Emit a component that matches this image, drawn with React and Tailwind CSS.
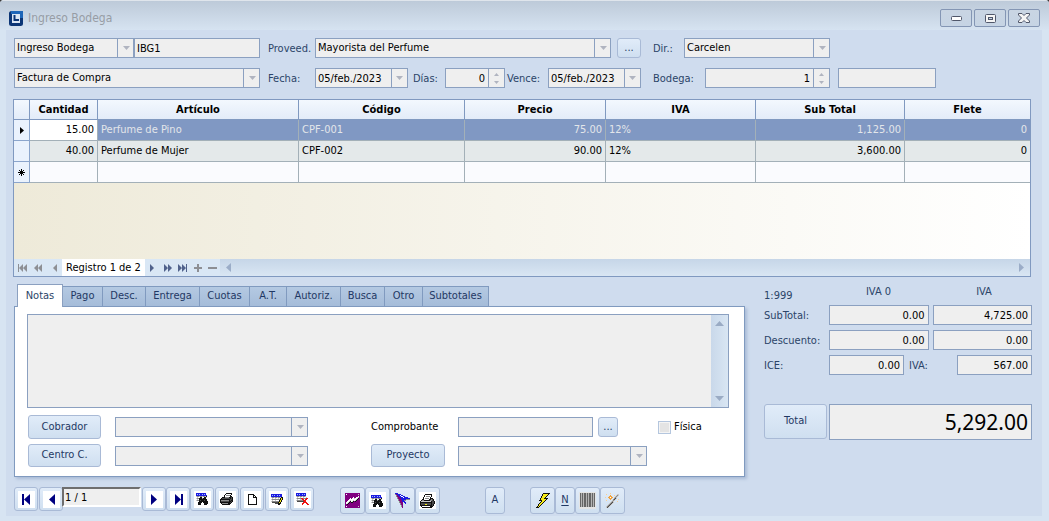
import React from "react";

const FIELD =
  "h-5 min-w-0 rounded-none border border-[#8ba0c0] bg-[#efefef] text-[11px] text-black outline-none";
const BTN =
  "flex items-center justify-center rounded-[3px] border border-[#a9bad6] bg-linear-to-b from-[#e1ecf9] to-[#cfdff0] text-[11px] text-[#1f3864]";
const LABEL = "pt-[2px] text-[11px] text-[#2b4468] whitespace-nowrap";

function Tri() {
  return (
    <svg width="7" height="4" viewBox="0 0 7 4" aria-hidden="true">
      <polygon points="0,0 7,0 3.5,4" fill="#b0b4c0" />
    </svg>
  );
}

function Combo({ label, value, id, className = "" }) {
  return (
    <div className={"relative " + className}>
      <select id={id} aria-label={label} defaultValue={value} className={FIELD + " block w-full appearance-none pl-[2px] pr-5"}>
        <option>{value}</option>
      </select>
      <span className="pointer-events-none absolute inset-y-0 right-0 flex w-[17px] items-center justify-center border-l border-[#8ba0c0]">
        <Tri />
      </span>
    </div>
  );
}

function DateBox({ id, value, className = "" }) {
  return (
    <div className={"flex " + className}>
      <input id={id} defaultValue={value} className={FIELD + " flex-1 pl-[2px]"} />
      <button type="button" aria-label="Abrir calendario" className="-ml-px flex h-5 w-[17px] items-center justify-center border border-[#8ba0c0] bg-[#efefef]">
        <Tri />
      </button>
    </div>
  );
}

function Spin({ id, value, className = "" }) {
  return (
    <div className={"flex " + className}>
      <input id={id} defaultValue={value} className={FIELD + " flex-1 pr-[3px] text-right"} />
      <div className="-ml-px flex h-5 w-[17px] flex-col items-center justify-center gap-[5px] border border-[#8ba0c0] bg-[#efefef]">
        <button type="button" aria-label="Subir"><svg width="5" height="3" viewBox="0 0 5 3" className="block"><polygon points="0,3 5,3 2.5,0" fill="#b0b4c0" /></svg></button>
        <button type="button" aria-label="Bajar"><svg width="5" height="3" viewBox="0 0 5 3" className="block"><polygon points="0,0 5,0 2.5,3" fill="#b0b4c0" /></svg></button>
      </div>
    </div>
  );
}

const PALETTE = {
  k: "#111111", b: "#1c1ce0", n: "#000080", g: "#8a8a8a", l: "#c9c9c9", w: "#ffffff",
  r: "#ee1111", y: "#f6ec1a", d: "#4a4a4a", p: "#800080", o: "#f9cf96", q: "#f2a23c", c: "#9fb8ff",
};

function Pixels({ rows, white = true }) {
  const w = Math.max(...rows.map((r) => r.length));
  const cells = [];
  rows.forEach((row, y) => {
    [...row].forEach((ch, x) => {
      if (PALETTE[ch]) cells.push(<rect key={x + "-" + y} x={x} y={y} width="1" height="1" fill={PALETTE[ch]} />);
    });
  });
  return (
    <span className={"flex h-[17px] w-[17px] items-center justify-center " + (white ? "bg-white" : "")}>
      <svg width={w} height={rows.length} viewBox={`0 0 ${w} ${rows.length}`} shapeRendering="crispEdges" aria-hidden="true">
        {cells}
      </svg>
    </span>
  );
}

function NavIcon({ flip, bar }) {
  return (
    <span className="flex h-[17px] w-[17px] items-center justify-center bg-white">
      <svg width="17" height="17" viewBox="0 0 17 17" className={flip ? "-scale-x-100" : ""} aria-hidden="true">
        {bar && <rect x="4" y="3" width="2" height="11" fill="#000080" />}
        <polygon points="12,3 12,14 6,8.5" fill="#000080" />
      </svg>
    </span>
  );
}

const FIND = [
  "bbbbbbbbbb...",
  "bcbcbbcbcb...",
  "bbbbbbbbbbb..",
  "lgglgglgglk..",
  ".lwwkkwwkkl..",
  "lggkkkgkkk...",
  ".lwkkkkkkkk..",
  "lggkdkkkdkk..",
  "...kkkkkkkkk.",
  "..kkkk.kkkkk.",
  "..kkk...kkkk.",
  "..kkk...kkk..",
];
const PRINT = [
  "......kkkkkk..",
  ".....kwwwwwk..",
  "....kwggggk...",
  "....kwwwwwkk..",
  "..kkkggggkkdk.",
  ".kddddddddkdk.",
  "kkkkkkkkkkddk.",
  "kggggggggkdkk.",
  "kddddddddkkdk.",
  "kkkkkkkkkkdk..",
  ".kggggggkkk...",
  "..kkkkkkkk....",
];
const PRINT_COLOR = [
  ".....kkkkkkk...",
  "....kwwwwwwk...",
  "....kwggggwk...",
  "...kwwwwwwk....",
  "...kwggggwkkk..",
  "..kkwwwwwkkgdk.",
  ".kggkkkkkkggdk.",
  "kllllllllllkddk",
  "kkkkkkkkkkkkddk",
  "kddddddddddkddk",
  "kddddyyddddkdk.",
  "kkkkkkkkkkkkdk.",
  ".kwwwwwwwwkkk..",
  "..kkkkkkkkkk...",
];
const PAGE = [
  "kkkkkk...",
  "k....kk..",
  "k....k.k.",
  "k....kkkk",
  "k.......k",
  "k.......k",
  "k.......k",
  "k.......k",
  "k.......k",
  "k.......k",
  "kkkkkkkkk",
];
const EDIT = [
  "bbbbbbbbbbb..",
  "bcbcbbcbcbb..",
  "bbbbbbbbbbb..",
  "lgglgglgglkk.",
  ".lwwlwwlwkyk.",
  "lggggggggkyk.",
  ".lwwlwwwkyk..",
  "lgggggggkyk..",
  ".ddddddkyk...",
  "....dddkkk...",
  ".......kk....",
];
const DEL = [
  "bbbbbbbbbb...",
  "bcbcbbcbcb...",
  "bbbbbbbbbb...",
  "lgglgglggl...",
  ".lwwlwwlwwl..",
  "lggggrrgggrr.",
  ".lwwllrrwrr..",
  "lggggggrrr...",
  ".dddddddrr...",
  ".......rrrr..",
  "......rr..rr.",
  "......r....rr",
];
const CHART = [
  "ppppppppppppppp",
  "pwppppppppppplp",
  "ppppppppppppppp",
  "pppppppppppppwp",
  "ppppppppwppwwlp",
  "pppppwpwwlwwlkp",
  "ppppwwwwwwwlkpp",
  "pppwwlwwlwlkppp",
  "ppwwlkwlkpkpppp",
  "pwwlkpkkppppppp",
  "pwlkppppppppppp",
  "ppkpppppppppppp",
  "ppppppppppppppp",
  "pwppppppppppplp",
  "ppppppppppppppp",
];
const CURSOR = [
  "bbb............",
  "gpbbbb.........",
  ".gpbbwbb.......",
  ".gppbbwwbb.....",
  "..gppbbbwbbbb..",
  "..gpppbbbbbbbbb",
  "...gppbbbbbgggg",
  "...gpppbbgg....",
  "....gppbbb.....",
  "....gppp.bb....",
  ".....gpp..b....",
  ".....gpp.......",
  "......gp.......",
  "......gp.......",
  ".......p.......",
];
const BOLT = [
  ".......kkkkkkk",
  "......kyyyyyk.",
  "......kyyyyk..",
  ".....kyyyyk...",
  ".....kyyyk....",
  "....kyyykkkk..",
  "....kyyyyyk...",
  "...kkkyyyk....",
  ".....kyyk.....",
  "....kyyk......",
  "...kyyk.......",
  "..kyyk........",
  "..kyk.........",
  ".kyk..........",
  "kkk...........",
];
const WAND = [
  ".....o.........",
  ".o..........ll.",
  ".....q...o.lgl.",
  "....qqq...lgl..",
  "o..qqwqq.lgl...",
  "....qqq..gdl...",
  ".....q..gdl..o.",
  ".o.....lgl.....",
  "......lgl...o..",
  ".....lgdl......",
  "....lgdl.......",
  "...lgdl........",
  "..lgdl.........",
  ".lgdl..........",
  ".ldl...........",
];

function Barcode() {
  const bars = [[0, 1], [2, 1], [4, 2], [7, 1], [9, 2], [12, 1], [14, 1]];
  return (
    <svg width="17" height="17" viewBox="0 0 17 17" shapeRendering="crispEdges" aria-hidden="true">
      <rect width="17" height="17" fill="#e4e4e4" />
      <rect x="1" y="1" width="14" height="14" fill="#b4b4b4" />
      {bars.map(([x, w]) => (
        <rect key={x} x={x + 1} y="1" width={w} height="14" fill="#666666" />
      ))}
    </svg>
  );
}

function Tool({ label, className = "h-6 w-6", children }) {
  return (
    <button aria-label={label} className={BTN + " shrink-0 " + className}>
      {children}
    </button>
  );
}

const COLUMNS = ["Cantidad", "Artículo", "Código", "Precio", "IVA", "Sub Total", "Flete"];
const TABS = [
  ["Pago", "w-[41px]"],
  ["Desc.", "w-[44px]"],
  ["Entrega", "w-[55px]"],
  ["Cuotas", "w-[51px]"],
  ["A.T.", "w-[38px]"],
  ["Autoriz.", "w-[55px]"],
  ["Busca", "w-[45px]"],
  ["Otro", "w-[39px]"],
  ["Subtotales", "w-[67px]"],
];

function TitleBar() {
  const wb =
    "flex h-[18px] w-8 items-center justify-center rounded-[2px] border border-[#8496b4] bg-linear-to-b from-[#c9d5e3] to-[#c6d4e4]";
  return (
    <header className="flex h-[30px] items-start justify-between border-t border-[#dfe5ec] bg-linear-to-b from-[#bdcad9] to-[#d6e3f1] pl-[9px] pr-[9px]">
      <div className="flex items-center gap-[5px] pt-[9px]">
        <svg width="14" height="15" viewBox="0 0 14 15" aria-hidden="true">
          <rect x="1.500" y="1.500" width="11" height="12" rx="1" fill="#dbe6f4" stroke="#0c3676" strokeWidth="3" />
          <path d="M2 1.500H12.500V7" fill="none" stroke="#1e66b8" strokeWidth="3" />
          <path d="M5.500 4V9H10" fill="none" stroke="#0c3676" strokeWidth="2" />
        </svg>
        <h1 className="text-[12px] leading-4 text-[#979da5]">Ingreso Bodega</h1>
      </div>
      <div className="flex gap-[2px] pt-2">
        <button aria-label="Minimizar" className={wb}>
          <svg width="11" height="5" viewBox="0 0 11 5"><rect x="0.500" y="0.500" width="10" height="4" rx="1" fill="#fff" stroke="#50576a" /></svg>
        </button>
        <button aria-label="Restaurar" className={wb}>
          <svg width="11" height="9" viewBox="0 0 11 9"><rect x="0.500" y="0.500" width="10" height="8" rx="1" fill="#f5f5f5" stroke="#50576a" /><rect x="3.500" y="3.500" width="4" height="2" fill="#c6d4e4" stroke="#50576a" /></svg>
        </button>
        <button aria-label="Cerrar" className={wb}>
          <svg width="12" height="10" viewBox="0 0 12 10">
            <path d="M0.500 0.500H4L6 2.500L8 0.500H11.500V2L8.500 5L11.500 8V9.500H8L6 7.500L4 9.500H0.500V8L3.500 5L0.500 2Z" fill="#f5f5f5" stroke="#50576a" />
          </svg>
        </button>
      </div>
    </header>
  );
}

function Form() {
  return (
    <form className="flex flex-col gap-[10px] pl-px" onSubmit={(e) => e.preventDefault()}>
      <div className="flex items-center">
        <Combo label="Tipo de ingreso" value="Ingreso Bodega" className="w-[120px]" />
        <input aria-label="Serie" defaultValue="IBG1" className={FIELD + " w-[126px] pl-[2px]"} />
        <label htmlFor="prov" className={LABEL + " ml-2 w-[47px]"}>Proveed.</label>
        <Combo id="prov" value="Mayorista del Perfume" className="w-[296px]" />
        <button type="button" aria-label="Buscar proveedor" className={BTN + " ml-[6px] h-5 w-6"}>...</button>
        <label htmlFor="dir" className={LABEL + " ml-3 w-[31px]"}>Dir.:</label>
        <Combo id="dir" value="Carcelen" className="w-[146px]" />
      </div>
      <div className="flex items-center">
        <Combo label="Documento" value="Factura de Compra" className="w-[246px]" />
        <label htmlFor="fecha" className={LABEL + " ml-2 w-[47px]"}>Fecha:</label>
        <DateBox id="fecha" value="05/feb./2023" className="w-[93px]" />
        <label htmlFor="dias" className={LABEL + " ml-[5px] w-8"}>Días:</label>
        <Spin id="dias" value="0" className="w-[60px]" />
        <label htmlFor="vence" className={LABEL + " ml-[2px] w-[41px]"}>Vence:</label>
        <DateBox id="vence" value="05/feb./2023" className="w-[93px]" />
        <label htmlFor="bodega" className={LABEL + " ml-3 w-[52px]"}>Bodega:</label>
        <Spin id="bodega" value="1" className="w-[125px]" />
        <input aria-label="Nombre de bodega" className={FIELD + " ml-2 w-[98px]"} />
      </div>
    </form>
  );
}

const IND = "border-r border-b border-[#8ba5cc] bg-[#eaf2fd] p-0";
const CELL = "border-r border-b border-[#a3b0b8] px-[3px] pt-px pb-0 last:border-r-0";

function Grid() {
  return (
    <section className="mt-[11px] mr-px border border-[#8099c0] bg-linear-to-r from-[#eeead9] to-white">
      <table className="w-full table-fixed border-separate border-spacing-0 text-[11px] text-black">
        <colgroup>
          <col className="w-4" />
          <col className="w-[68px]" />
          <col className="w-[201px]" />
          <col className="w-[166px]" />
          <col className="w-[141px]" />
          <col className="w-[150px]" />
          <col className="w-[149px]" />
          <col />
        </colgroup>
        <thead>
          <tr className="h-5 bg-linear-to-b from-[#f3f8fe] to-[#e2ebf8]">
            <th className="border-r border-b border-[#8099c0] p-0" aria-label="Estado" />
            {COLUMNS.map((c) => (
              <th key={c} className="border-r border-b border-[#8099c0] px-0 pt-px pb-0 font-bold last:border-r-0">{c}</th>
            ))}
          </tr>
        </thead>
        <tbody>
          <tr className="h-[21px] bg-[#8098c3] text-[#e3e6ea]">
            <td className={IND}>
              <svg width="4" height="7" viewBox="0 0 4 7" className="mx-auto"><polygon points="0,0 4,3.5 0,7" fill="#000" /></svg>
            </td>
            <td className={CELL + " bg-white text-right text-black"}>15.00</td>
            <td className={CELL}>Perfume de Pino</td>
            <td className={CELL}>CPF-001</td>
            <td className={CELL + " text-right"}>75.00</td>
            <td className={CELL}>12%</td>
            <td className={CELL + " text-right"}>1,125.00</td>
            <td className={CELL + " text-right"}>0</td>
          </tr>
          <tr className="h-[21px] bg-[#e4e9ea]">
            <td className={IND} />
            <td className={CELL + " text-right"}>40.00</td>
            <td className={CELL}>Perfume de Mujer</td>
            <td className={CELL}>CPF-002</td>
            <td className={CELL + " text-right"}>90.00</td>
            <td className={CELL}>12%</td>
            <td className={CELL + " text-right"}>3,600.00</td>
            <td className={CELL + " text-right"}>0</td>
          </tr>
          <tr className="h-[21px] bg-[#fafbfe]">
            <td className={IND}>
              <svg width="7" height="7" viewBox="0 0 7 7" className="mx-auto">
                <path d="M3.5 0V7M0 3.5H7M1 1L6 6M6 1L1 6" stroke="#000" strokeWidth="1" />
              </svg>
            </td>
            {COLUMNS.map((c) => <td key={c} className={CELL} />)}
          </tr>
        </tbody>
      </table>
      <div className="h-[76px]" />
      <RecordNav />
    </section>
  );
}

function NavGlyph({ label, d, dark }) {
  return (
    <button aria-label={label} className={"flex h-[17px] shrink-0 items-center justify-center " + (dark ? "w-[15px]" : "w-4")}>
      <svg width="11" height="8" viewBox="0 0 11 8"><path d={d} fill={dark === "blue" ? "#50628c" : "#8d8f94"} /></svg>
    </button>
  );
}

function RecordNav() {
  return (
    <div className="flex h-[17px] bg-linear-to-b from-[#c6d6e8] to-[#d9e6f3]">
      <div className="flex shrink-0 items-center bg-[#d9e7f5]">
        <NavGlyph label="Primero" d="M1 0H2V8H1ZM6 0V8L2 4ZM10 0V8L6 4Z" />
        <NavGlyph label="Página anterior" d="M5 0V8L1 4ZM9 0V8L5 4Z" />
        <NavGlyph label="Anterior" d="M8 0V8L4 4Z" />
        <span className="flex h-[17px] w-[83px] shrink-0 items-center justify-center whitespace-nowrap bg-white pt-px text-[11px] text-black">Registro 1 de 2</span>
        <NavGlyph label="Siguiente" dark="blue" d="M3 0V8L7 4Z" />
        <NavGlyph label="Página siguiente" dark="blue" d="M2 0V8L6 4ZM6 0V8L10 4Z" />
        <NavGlyph label="Último" dark="blue" d="M1 0V8L5 4ZM5 0V8L9 4ZM9 0H10V8H9Z" />
        <NavGlyph label="Agregar" dark="gray" d="M5 0H7V3H10V5H7V8H5V5H2V3H5Z" />
        <NavGlyph label="Quitar" dark="gray" d="M1 3H10V5H1Z" />
      </div>
      <div className="flex flex-1 items-center justify-between px-[6px]">
        <svg width="5" height="9" viewBox="0 0 5 9"><polygon points="5,0 5,9 0,4.5" fill="#9badc8" /></svg>
        <svg width="5" height="9" viewBox="0 0 5 9"><polygon points="0,0 0,9 5,4.5" fill="#9badc8" /></svg>
      </div>
    </div>
  );
}

function NotesPanel() {
  return (
    <section className="w-[731px] shrink-0">
      <div role="tablist" className="flex items-end pl-[3px]">
        <button role="tab" aria-selected="true" className="relative z-10 -mb-px h-[23px] w-[46px] border border-b-0 border-[#8ba0c0] bg-white text-[11px] text-[#2b4468]">
          Notas
        </button>
        {TABS.map(([name, width]) => (
          <button
            key={name}
            role="tab"
            aria-selected="false"
            className={"-ml-px h-5 border border-b-0 border-[#809abf] bg-linear-to-b from-[#b4c9e2] to-[#a5bcd9] text-center text-[11px] text-[#1f3864] " + width}
          >
            {name}
          </button>
        ))}
      </div>
      <div className="flex flex-col border border-[#809abf] bg-white pt-[7px] pr-[15px] pb-[9px] pl-3 shadow-[2px_2px_3px_#a9bbd6]">
        <div className="flex h-[94px] border border-[#8ba0c0]">
          <textarea aria-label="Notas" className="flex-1 resize-none bg-[#efefef] outline-none" />
          <div className="flex w-[17px] flex-col items-center justify-between bg-linear-to-r from-[#c9d8ea] to-[#d9e6f3] py-[6px]">
            <svg width="9" height="5" viewBox="0 0 9 5"><polygon points="0,5 9,5 4.5,0" fill="#9aabc4" /></svg>
            <svg width="9" height="5" viewBox="0 0 9 5"><polygon points="0,0 9,0 4.5,5" fill="#9aabc4" /></svg>
          </div>
        </div>
        <div className="mt-[7px] flex items-center pl-px">
          <button className={BTN + " h-6 w-[73px]"}>Cobrador</button>
          <Combo label="Cobrador" value="" className="ml-[14px] w-[193px]" />
          <label htmlFor="comp" className="ml-[63px] w-[87px] text-[11px] text-black">Comprobante</label>
          <input id="comp" className={FIELD + " w-[135px]"} />
          <button aria-label="Buscar comprobante" className={BTN + " ml-[5px] h-5 w-5"}>...</button>
          <input
            id="fisica"
            type="checkbox"
            className="ml-10 h-[13px] w-[13px] appearance-none border border-[#b4c6de] bg-[#e4e4e4] shadow-[inset_0_0_0_1px_#f4f4f4]"
          />
          <label htmlFor="fisica" className="ml-[3px] text-[11px] text-black">Física</label>
        </div>
        <div className="mt-[5px] flex items-center pl-px">
          <button className={BTN + " h-[23px] w-[73px]"}>Centro C.</button>
          <Combo label="Centro de costo" value="" className="ml-[14px] w-[193px]" />
          <button className={BTN + " ml-[63px] h-[23px] w-[74px]"}>Proyecto</button>
          <Combo label="Proyecto" value="" className="ml-[13px] w-[189px]" />
        </div>
      </div>
    </section>
  );
}

function Totals() {
  const num = FIELD + " w-full pr-[3px] text-right";
  return (
    <section className="w-[268px] shrink-0">
      <div className="grid h-[21px] grid-cols-[65px_99px_1fr] text-[11px] text-[#2b4468]">
        <span className="pt-1 leading-4">1:999</span>
        <span className="text-center leading-4">IVA 0</span>
        <span className="pl-2 text-center leading-4">IVA</span>
      </div>
      <div className="flex flex-col gap-[5px]">
        <div className="flex items-center">
          <label htmlFor="sub0" className={LABEL + " w-[65px]"}>SubTotal:</label>
          <div className="flex flex-1 gap-1">
            <input id="sub0" defaultValue="0.00" className={num} />
            <input aria-label="SubTotal IVA" defaultValue="4,725.00" className={num} />
          </div>
        </div>
        <div className="flex items-center">
          <label htmlFor="desc0" className={LABEL + " w-[65px]"}>Descuento:</label>
          <div className="flex flex-1 gap-1">
            <input id="desc0" defaultValue="0.00" className={num} />
            <input aria-label="Descuento IVA" defaultValue="0.00" className={num} />
          </div>
        </div>
        <div className="flex items-center">
          <label htmlFor="ice" className={LABEL + " w-[65px]"}>ICE:</label>
          <input id="ice" defaultValue="0.00" className={FIELD + " w-[75px] pr-[3px] text-right"} />
          <label htmlFor="iva" className={LABEL + " ml-[5px] flex-1"}>IVA:</label>
          <input id="iva" defaultValue="567.00" className={FIELD + " w-[75px] pr-[3px] text-right"} />
        </div>
      </div>
      <div className="mt-[29px] flex items-start gap-[2px]">
        <button className={BTN + " h-[35px] w-[63px]"}>Total</button>
        <input
          aria-label="Total"
          defaultValue="5,292.00"
          className="h-9 min-w-0 flex-1 border border-[#8ba0c0] bg-[#efefef] pr-[3px] text-right font-['Noto_Sans',sans-serif] text-[21px] text-black outline-none"
        />
      </div>
    </section>
  );
}

function Toolbar() {
  return (
    <footer className="mt-[10px] flex items-start pl-px">
      <div className="flex gap-px">
        <Tool label="Primero"><NavIcon bar /></Tool>
        <Tool label="Anterior"><NavIcon /></Tool>
        <input
          aria-label="Registro"
          defaultValue="1 / 1"
          className="-ml-[2px] h-5 w-[79px] border-2 border-t-[#6e6e6e] border-l-[#6e6e6e] border-r-white border-b-white bg-[#efefef] pl-px text-[11px] text-black outline-none"
        />
        <div className="flex">
          <Tool label="Siguiente"><NavIcon flip /></Tool>
          <Tool label="Último"><NavIcon flip bar /></Tool>
          <Tool label="Buscar"><Pixels rows={FIND} /></Tool>
        </div>
        <Tool label="Imprimir"><Pixels rows={PRINT} /></Tool>
        <Tool label="Nuevo"><Pixels rows={PAGE} /></Tool>
        <Tool label="Editar"><Pixels rows={EDIT} /></Tool>
        <Tool label="Eliminar"><Pixels rows={DEL} /></Tool>
      </div>
      <div className="ml-[26px] flex">
        <Tool label="Gráfico" className="h-[27px] w-[25px]"><Pixels rows={CHART} white={false} /></Tool>
        <Tool label="Consultar" className="h-[27px] w-[25px]"><Pixels rows={FIND} /></Tool>
        <Tool label="Seleccionar" className="h-[27px] w-[25px]"><Pixels rows={CURSOR} white={false} /></Tool>
        <Tool label="Imprimir documento" className="h-[27px] w-[25px]"><Pixels rows={PRINT_COLOR} /></Tool>
      </div>
      <Tool label="A" className="ml-[45px] h-[27px] w-5">A</Tool>
      <div className="ml-[25px] flex">
        <Tool label="Procesar" className="h-[27px] w-[25px]"><Pixels rows={BOLT} white={false} /></Tool>
        <Tool label="N" className="h-[27px] w-5"><span className="underline underline-offset-2">N</span></Tool>
        <Tool label="Código de barras" className="h-[27px] w-[25px]"><Barcode /></Tool>
        <Tool label="Asistente" className="h-[27px] w-[25px]"><Pixels rows={WAND} white={false} /></Tool>
      </div>
    </footer>
  );
}

export default function App() {
  return (
    <div className="bg-[#3b3b3b] font-['DejaVu_Sans_Condensed','Noto_Sans',sans-serif]">
      <div className="overflow-hidden rounded-t-[4px] bg-[#d7e4f2]">
        <TitleBar />
        <div className="pr-[7px] pb-[6px] pl-[6px]">
          <main className="bg-[#cfdcee] pt-2 pr-[10px] pb-[2px] pl-[7px]">
            <Form />
            <Grid />
            <div className="mt-[7px] flex items-start justify-between pl-px">
              <NotesPanel />
              <Totals />
            </div>
            <Toolbar />
          </main>
        </div>
      </div>
    </div>
  );
}
